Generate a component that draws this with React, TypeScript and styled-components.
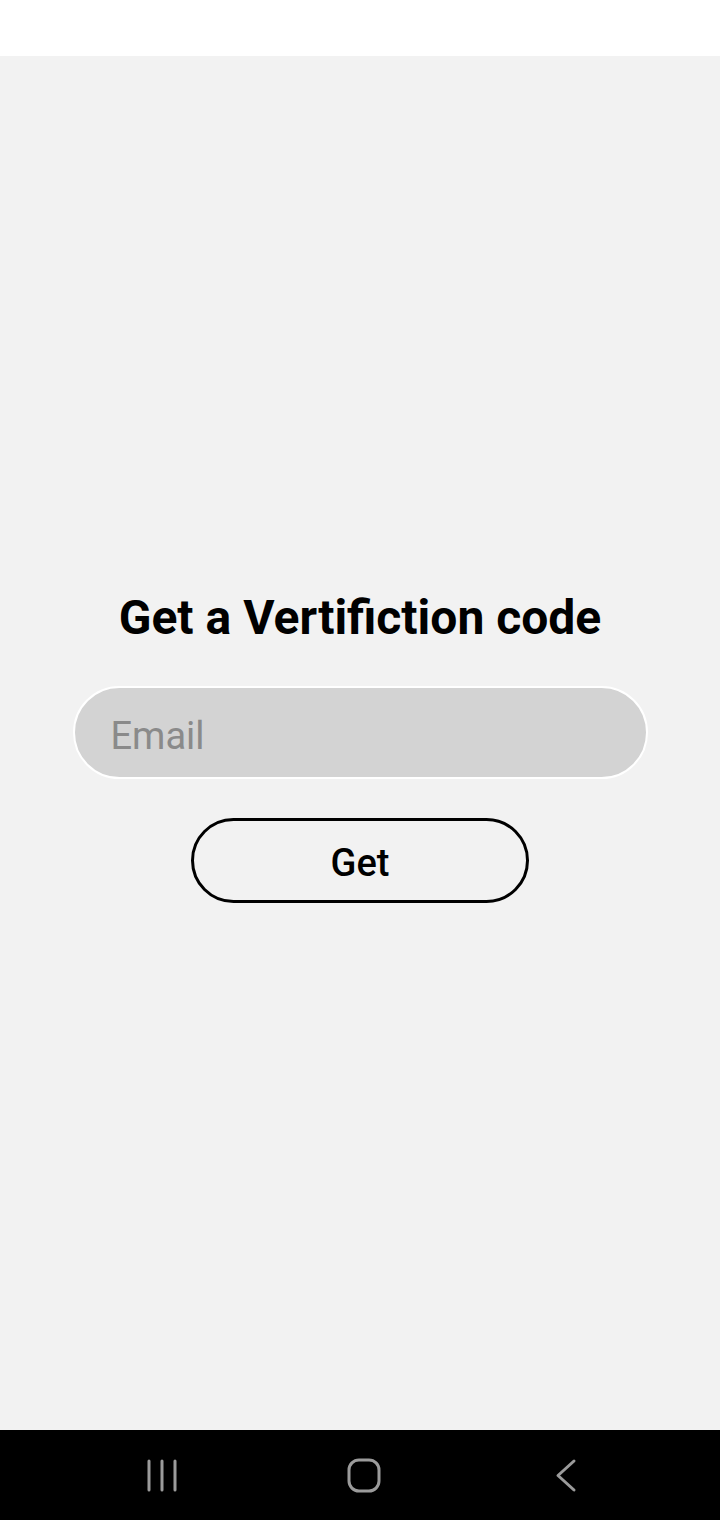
import React from "react";
import styled, { createGlobalStyle } from "styled-components";

const Global = createGlobalStyle`
  html, body { margin: 0; padding: 0; }
  body { font-family: Roboto, "Noto Sans", sans-serif; background: #f2f2f2; }
  * { box-sizing: border-box; }
`;

const Screen = styled.div`
  width: 720px;
  height: 1520px;
  display: flex;
  flex-direction: column;
`;

const StatusBar = styled.div`
  height: 56px;
  background: #ffffff;
  flex: none;
`;

const Main = styled.main`
  flex: 1;
  background: #f2f2f2;
  display: flex;
  flex-direction: column;
  align-items: center;
  padding-top: 532px;
`;

const Title = styled.h1`
  margin: 0;
  font-family: Roboto, sans-serif;
  font-weight: 700;
  font-size: 48px;
  line-height: 60px;
  color: #000;
`;

const EmailInput = styled.input`
  margin-top: 38px;
  width: 575px;
  height: 93px;
  border-radius: 47px;
  border: 2px solid #ffffff;
  background: #d3d3d3;
  padding: 6px 0 0 36px;
  font-family: Roboto, sans-serif;
  font-size: 38px;
  color: #000;
  outline: none;
  &::placeholder { color: #8a8a8a; }
`;

const GetButton = styled.button`
  margin-top: 39px;
  width: 338px;
  height: 85px;
  border-radius: 43px;
  border: 3px solid #000;
  background: transparent;
  padding: 4px 0 0;
  font-family: Roboto, sans-serif;
  font-weight: 500;
  font-size: 38px;
  color: #000;
  cursor: pointer;
`;

const NavBar = styled.nav`
  height: 90px;
  flex: none;
  background: #000;
  display: grid;
  grid-template-columns: 1fr 1fr 1fr;
  align-items: center;
  justify-items: center;
`;

const NavIcon = styled.svg`
  display: block;
`;

export default function App() {
  return (
    <>
      <Global />
      <Screen>
        <StatusBar />
        <Main>
          <Title>Get a Vertifiction code</Title>
          <EmailInput type="email" placeholder="Email" />
          <GetButton>Get</GetButton>
        </Main>
        <NavBar>
          <NavIcon width="40" height="40" viewBox="0 0 40 40" style={{ marginLeft: 84 }}>
            <g stroke="#9b9b9b" strokeWidth="3" strokeLinecap="round">
              <line x1="7" y1="6" x2="7" y2="35" />
              <line x1="20" y1="6" x2="20" y2="35" />
              <line x1="33" y1="6" x2="33" y2="35" />
            </g>
          </NavIcon>
          <NavIcon width="40" height="40" viewBox="0 0 40 40" style={{ marginLeft: 7 }}>
            <rect x="5" y="5" width="30" height="31" rx="10" fill="none" stroke="#9b9b9b" strokeWidth="3" />
          </NavIcon>
          <NavIcon width="40" height="40" viewBox="0 0 40 40" style={{ marginRight: 69 }}>
            <polyline points="28,6 12,20.5 28,35" fill="none" stroke="#9b9b9b" strokeWidth="3" strokeLinecap="round" strokeLinejoin="round" />
          </NavIcon>
        </NavBar>
      </Screen>
    </>
  );
}
